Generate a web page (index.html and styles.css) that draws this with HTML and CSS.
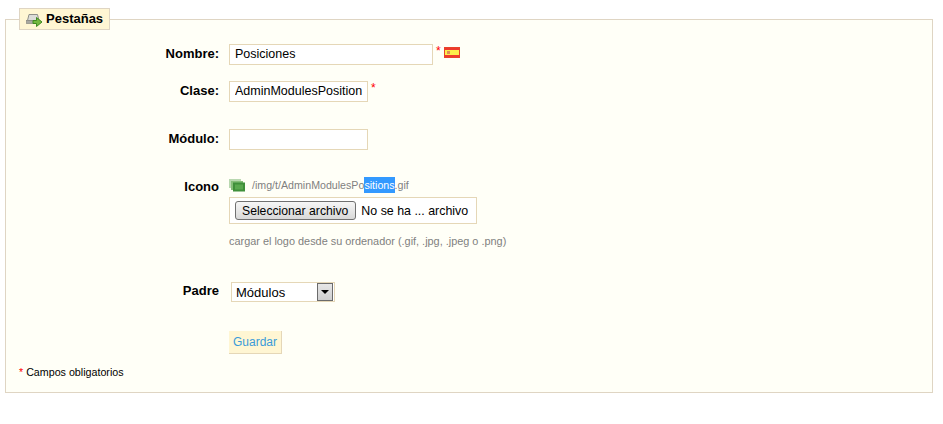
FILE: index.html
```html
<!DOCTYPE html>
<html lang="es">

<head>
    <meta charset="UTF-8">
    <meta name="viewport" content="width=device-width, initial-scale=1.0">
    <title>Pestañas</title>
    <link rel="stylesheet" href="styles.css">
</head>

<body>

    <form class="panel">
        <fieldset>
            <legend>
                <svg class="icono-legend" width="17" height="15" viewBox="0 0 17 15">
                    <path d="M3 2.500h8.500l1.500 6H1.500z" fill="#dcdcd8" stroke="#8f8f89"/>
                    <rect x="0.500" y="8.500" width="12" height="3" fill="#a8a8a2" stroke="#8a8a84" stroke-width="0.7"/>
                    <path d="M7 8.500h3.500v-3l5.500 4.500-5.500 4.500v-3H7z" fill="#74b83f" stroke="#3f8a22"/>
                </svg>
                Pestañas
            </legend>

            <div class="fila fila-nombre">
                <label for="nombre">Nombre:</label>
                <div class="campo">
                    <input id="nombre" class="txt-nombre" type="text" value="Posiciones">
                    <sup class="req">*</sup>
                    <svg class="bandera" width="16" height="11" viewBox="0 0 16 11">
                        <rect width="16" height="11" fill="#ee3a2c"/>
                        <rect y="3" width="16" height="5" fill="#fdee4a"/>
                        <rect x="3" y="4" width="3" height="3" fill="#e08a58"/>
                        <rect x="0.500" y="0.500" width="15" height="10" fill="none" stroke="#e8432a"/>
                    </svg>
                </div>
            </div>

            <div class="fila fila-clase">
                <label for="clase">Clase:</label>
                <div class="campo">
                    <input id="clase" class="txt-corto" type="text" value="AdminModulesPosition">
                    <sup class="req">*</sup>
                </div>
            </div>

            <div class="fila fila-modulo">
                <label for="modulo">Módulo:</label>
                <div class="campo">
                    <input id="modulo" class="txt-corto" type="text">
                </div>
            </div>

            <div class="fila fila-icono">
                <label>Icono</label>
                <div class="campo-col">
                    <div class="ruta">
                        <svg width="16" height="13" viewBox="0 0 16 13">
                            <rect x="0" y="0" width="12" height="9" fill="#b9d8b0"/>
                            <rect x="2" y="2" width="12" height="9" fill="#85bd78"/>
                            <rect x="4" y="3.500" width="12" height="9" fill="#3f8f3a"/>
                            <rect x="6" y="5.500" width="8" height="5" fill="#5aa84f"/>
                        </svg>
                        <span>/img/t/AdminModulesPo<span class="sel">sitions</span>.gif</span>
                    </div>
                    <div class="archivo">
                        <span class="btn-archivo">Seleccionar archivo</span>
                        <span>No se ha ... archivo</span>
                    </div>
                    <p class="ayuda">cargar el logo desde su ordenador (.gif, .jpg, .jpeg o .png)</p>
                </div>
            </div>

            <div class="fila fila-padre">
                <label for="padre">Padre</label>
                <div class="select" id="padre">
                    <span>Módulos</span>
                    <span class="flecha"></span>
                </div>
            </div>

            <div class="fila fila-guardar">
                <label></label>
                <button type="button">Guardar</button>
            </div>

            <p class="obligatorios"><span class="rojo">*</span> Campos obligatorios</p>
        </fieldset>
    </form>

</body>

</html>
```

FILE: styles.css
```css
body {
    margin: 0;
    background-color: #fff;
    font-family: "Liberation Sans", Arial, sans-serif;
    font-size: 12px;
    color: #000;
}

.panel {
    padding: 8px 10px 0 5px;
}

fieldset {
    margin: 0;
    padding: 14px 0 0;
    height: 385px;
    box-sizing: border-box;
    background: #fffff7;
    border: 1px solid #dfd5c3;
}

legend {
    margin-left: 13px;
    padding: 0 6px 0 6px;
    height: 22px;
    box-sizing: border-box;
    background: #fff6d3;
    border: 1px solid #dfd5c3;
    font-size: 13px;
    font-weight: bold;
    line-height: 20px;
    display: flex;
    align-items: center;
    gap: 3px;
}

.fila {
    display: flex;
    align-items: flex-start;
}

.fila label {
    width: 213px;
    flex: none;
    margin-right: 10px;
    text-align: right;
    font-size: 13px;
    font-weight: bold;
    line-height: 20px;
}

.fila-clase {
    margin-top: 16px;
}

.fila-modulo {
    margin-top: 27px;
}

.fila-icono {
    margin-top: 28px;
}

.fila-icono label {
    margin-top: -1px;
    margin-bottom: 1px;
}

.fila-padre {
    margin-top: 36px;
}

.fila-padre label {
    margin-top: -2px;
}

.fila-guardar {
    margin-top: 29px;
}

.campo {
    display: flex;
    align-items: flex-start;
}

input {
    height: 21px;
    box-sizing: border-box;
    padding: 0 5px 2px;
    background: #fff;
    border: 1px solid #e5d7b7;
    font-family: "Liberation Sans", Arial, sans-serif;
    font-size: 12.5px;
    color: #000;
    outline: 0;
}

.txt-nombre {
    width: 204px;
}

.txt-corto {
    width: 139px;
}

.req {
    margin: 0 0 0 3px;
    color: #f00;
    font-size: 12px;
    line-height: 14px;
}

.bandera {
    margin: 3px 0 0 3px;
}

.ruta {
    display: flex;
    align-items: center;
    gap: 7px;
    height: 14px;
    font-size: 10.65px;
    color: #7f7f7f;
}

.sel {
    padding: 2px 0;
    background: #3399ff;
    color: #fff;
}

.archivo {
    display: flex;
    align-items: center;
    gap: 5px;
    width: 248px;
    height: 27px;
    box-sizing: border-box;
    margin-top: 5px;
    padding-left: 5px;
    background: #fff;
    border: 1px solid #e5d7b7;
    font-size: 12.4px;
}

.btn-archivo {
    padding: 1px 7px 0 6px;
    height: 19px;
    line-height: 17px;
    box-sizing: border-box;
    background: linear-gradient(#f6f6f6, #d8d8d8);
    border: 1px solid #707070;
    border-radius: 3px;
    font-size: 12.2px;
}

.ayuda {
    margin: 11px 0 0;
    font-size: 10.9px;
    color: #7f7f7f;
}

.select {
    display: flex;
    align-items: center;
    justify-content: space-between;
    width: 104px;
    height: 20px;
    box-sizing: border-box;
    margin: -1px 0 0 2px;
    padding: 1px 1px 0 4px;
    background: #fff;
    border: 1px solid #e5d7b7;
    font-size: 13px;
}

.flecha {
    width: 16px;
    height: 18px;
    box-sizing: border-box;
    margin-top: -1px;
    position: relative;
    background: linear-gradient(#e6e6e6, #cfcfcf);
    border: 1px solid #6b6b6b;
}

.flecha::after {
    content: "";
    position: absolute;
    left: 3px;
    top: 6px;
    border-left: 4px solid transparent;
    border-right: 4px solid transparent;
    border-top: 4px solid #000;
}

button {
    width: 53px;
    height: 23px;
    padding: 0;
    background: #fff6d3;
    border: 0;
    border-right: 1px solid #e5d7b7;
    border-bottom: 1px solid #e5d7b7;
    font-family: "Liberation Sans", Arial, sans-serif;
    font-size: 12px;
    color: #3a9bd9;
}

.obligatorios {
    margin: 12px 0 0 13px;
    font-size: 10.7px;
}

.rojo {
    color: #f00;
}
```
